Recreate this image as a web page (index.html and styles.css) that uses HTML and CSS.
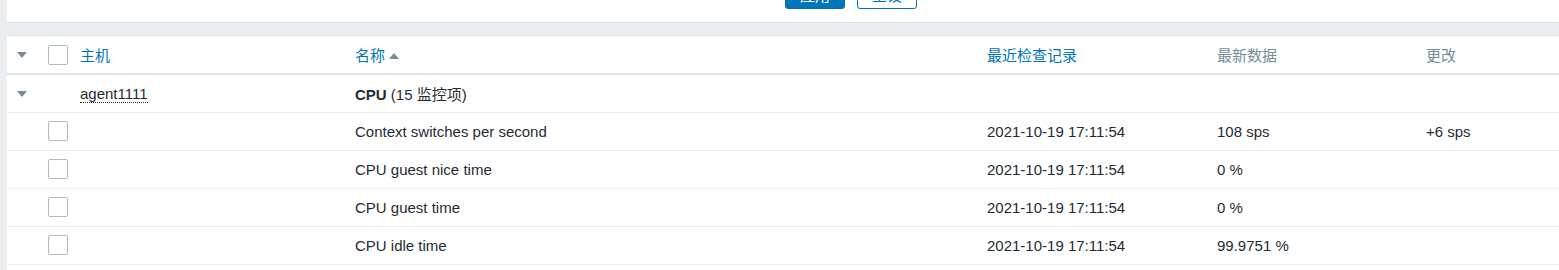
FILE: index.html
```html
<!DOCTYPE html>
<html lang="zh-CN">
<head>
    <meta charset="UTF-8">
    <meta name="viewport" content="width=device-width, initial-scale=1.0">
    <title>最新数据</title>
    <link rel="stylesheet" href="styles.css">
</head>
<body>

    <!-- Filter panel (only its bottom edge is visible) -->
    <div class="filter-panel">
        <div class="filter-buttons">
            <button class="btn btn-primary">应用</button>
            <button class="btn btn-alt">重设</button>
        </div>
    </div>

    <div class="table-panel">
        <table class="list-table">
            <colgroup>
                <col class="col-toggle">
                <col class="col-check">
                <col class="col-host">
                <col class="col-name">
                <col class="col-clock">
                <col class="col-value">
                <col>
            </colgroup>
            <thead>
                <tr>
                    <th><span class="arrow-down"></span></th>
                    <th><span class="checkbox"></span></th>
                    <th><a class="sort-link" href="#">主机</a></th>
                    <th><a class="sort-link" href="#">名称</a><span class="arrow-up"></span></th>
                    <th><a class="sort-link" href="#">最近检查记录</a></th>
                    <th class="muted">最新数据</th>
                    <th class="muted">更改</th>
                </tr>
            </thead>
            <tbody>
                <tr class="group-row">
                    <td><span class="arrow-down"></span></td>
                    <td></td>
                    <td><span class="host-link">agent1111</span></td>
                    <td><strong>CPU</strong> (15 监控项)</td>
                    <td></td>
                    <td></td>
                    <td></td>
                </tr>
                <tr>
                    <td></td>
                    <td><span class="checkbox"></span></td>
                    <td></td>
                    <td>Context switches per second</td>
                    <td>2021-10-19 17:11:54</td>
                    <td>108 sps</td>
                    <td>+6 sps</td>
                </tr>
                <tr>
                    <td></td>
                    <td><span class="checkbox"></span></td>
                    <td></td>
                    <td>CPU guest nice time</td>
                    <td>2021-10-19 17:11:54</td>
                    <td>0 %</td>
                    <td></td>
                </tr>
                <tr>
                    <td></td>
                    <td><span class="checkbox"></span></td>
                    <td></td>
                    <td>CPU guest time</td>
                    <td>2021-10-19 17:11:54</td>
                    <td>0 %</td>
                    <td></td>
                </tr>
                <tr>
                    <td></td>
                    <td><span class="checkbox"></span></td>
                    <td></td>
                    <td>CPU idle time</td>
                    <td>2021-10-19 17:11:54</td>
                    <td>99.9751 %</td>
                    <td></td>
                </tr>
            </tbody>
        </table>
    </div>

</body>
</html>
```

FILE: styles.css
```css
/* Global Reset */
* {
    margin: 0;
    padding: 0;
    box-sizing: border-box;
}

body {
    font-family: 'Liberation Sans', Arial, 'Noto Sans CJK SC', sans-serif;
    font-size: 15px;
    color: #1f2c33;
    background-color: #ebeef0;
    padding-left: 7px;
    height: 270px;
    overflow: hidden;
}

/* Filter panel */
.filter-panel {
    background: #fff;
    height: 23px;
    border-bottom: 1px solid #dfe4e7;
    overflow: hidden;
}

.filter-buttons {
    display: flex;
    gap: 12px;
    margin-top: -21px;
    padding-left: 778px;
}

.btn {
    width: 60px;
    height: 30px;
    border-radius: 3px;
    font-family: inherit;
    font-size: 15px;
    border: 1px solid #0275b8;
}

.btn-primary {
    background: #0275b8;
    color: #fff;
}

.btn-alt {
    background: #fff;
    color: #0275b8;
}

/* Table panel */
.table-panel {
    margin-top: 12px;
    background: #fff;
    border-top: 1px solid #dfe4e7;
    padding-bottom: 10px;
}

.list-table {
    width: 100%;
    border-collapse: collapse;
    table-layout: fixed;
}

.col-toggle { width: 35px; }
.col-check { width: 32px; }
.col-host { width: 275px; }
.col-name { width: 632px; }
.col-clock { width: 230px; }
.col-value { width: 209px; }

.list-table th,
.list-table td {
    height: 38px;
    padding: 0 6px;
    text-align: left;
    font-weight: normal;
    vertical-align: middle;
    white-space: nowrap;
}

.list-table th:first-child,
.list-table td:first-child {
    padding-left: 10px;
}

.list-table thead tr {
    border-bottom: 2px solid #dfe4e7;
}

.list-table tbody tr {
    border-bottom: 1px solid #ebeef0;
}

.sort-link {
    color: #0275b8;
    text-decoration: none;
}

.muted {
    color: #768d99;
}

.list-table strong {
    font-weight: bold;
}

.host-link {
    border-bottom: 1px dotted #1f2c33;
}

/* Toggle and sort arrows */
.arrow-down {
    display: inline-block;
    width: 0;
    height: 0;
    border-left: 5px solid transparent;
    border-right: 5px solid transparent;
    border-top: 6px solid #768d99;
    vertical-align: middle;
    margin-top: -2px;
}

.arrow-up {
    display: inline-block;
    width: 0;
    height: 0;
    border-left: 5px solid transparent;
    border-right: 5px solid transparent;
    border-bottom: 6px solid #768d99;
    margin-left: 4px;
    vertical-align: middle;
    margin-top: -3px;
}

.checkbox {
    display: inline-block;
    width: 20px;
    height: 20px;
    border: 1px solid #acbbc2;
    border-radius: 2px;
    vertical-align: middle;
    background: #fff;
}
```
